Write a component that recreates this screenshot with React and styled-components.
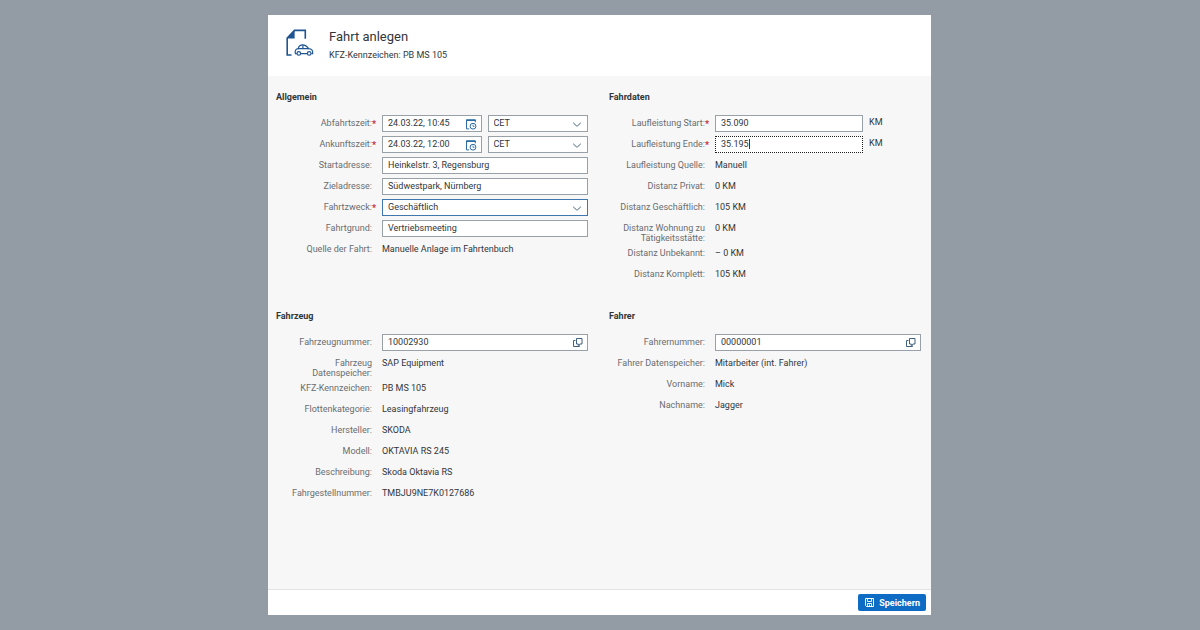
import React from "react";
import styled, { createGlobalStyle } from "styled-components";

const GlobalStyle = createGlobalStyle`
  * {
    box-sizing: border-box;
  }

  body {
    margin: 0;
    background-color: #939ca5;
    color: #32363a;
    font-family: Roboto, "Liberation Sans", sans-serif;
    font-size: 9px;
    line-height: 10px;
  }

  input, select, button {
    font: inherit;
    color: inherit;
  }
`;

const Page = styled.div`
  min-height: 100vh;
  padding: 15px 16px 15px 15px;
  display: flex;
  justify-content: center;
`;

const Dialog = styled.form`
  width: 100%;
  max-width: 663px;
  display: flex;
  flex-direction: column;
  background-color: #f7f7f7;
`;

const Header = styled.header`
  display: flex;
  gap: 14px;
  padding: 13px 17px 14px;
  background-color: #fff;
`;

const Title = styled.h1`
  margin: 0 0 3px;
  font-size: 13px;
  line-height: 17px;
  font-weight: 400;
`;

const Subtitle = styled.p`
  margin: 0;
  line-height: 14px;
`;

const Content = styled.main`
  flex: 1;
  display: grid;
  grid-template-columns: 1fr 1fr;
  align-content: start;
  gap: 25px 21px;
  padding: 15px 10px 15px 8px;
`;

const Section = styled.section`
  min-width: 0;
`;

const SectionTitle = styled.h2`
  margin: 0 0 10px;
  font-size: 9px;
  line-height: 12px;
  font-weight: 700;
`;

const Row = styled.div`
  display: grid;
  grid-template-columns: 96px 10px 1fr;
  align-items: start;
  min-height: 21px;
`;

const Label = styled.label`
  padding-top: 5px;
  color: #6a6d70;
  text-align: right;
`;

const Marker = styled.span`
  padding-top: 6px;
  color: #c4283a;
  font-weight: 700;
`;

const Value = styled.output`
  padding-top: 5px;
`;

const Fields = styled.div`
  display: flex;
  gap: 6px;
  padding-top: 2px;
`;

const Box = styled.div`
  flex: 1;
  min-width: 0;
  height: 17px;
  display: flex;
  align-items: flex-start;
  padding: 0 4px 0 5px;
  background-color: #fff;
  border: 1px ${(props) => (props.$focused ? "dotted" : "solid")}
    ${(props) => (props.$focused ? "#1c1f22" : props.$active ? "#3f78ae" : "#98a0a8")};
`;

const Input = styled.input`
  flex: ${(props) => (props.$fit ? "none" : "1")};
  field-sizing: ${(props) => (props.$fit ? "content" : "fixed")};
  width: ${(props) => (props.$fit ? "auto" : "100%")};
  min-width: 0;
  height: 14px;
  padding: 0;
  border: 0;
  outline: 0;
  background: transparent;
`;

const Caret = styled.span`
  width: 1px;
  height: 10px;
  margin-top: 2px;
  background-color: #32363a;
`;

const SelectBox = styled(Box)`
  display: grid;
  padding: 0 5px;

  > * {
    grid-area: 1 / 1;
  }

  > svg {
    justify-self: end;
    align-self: center;
    pointer-events: none;
  }
`;

const Select = styled.select`
  appearance: none;
  width: 100%;
  height: 14px;
  padding: 0;
  border: 0;
  outline: 0;
  background: transparent;
`;

const IconButton = styled.button`
  flex: none;
  align-self: center;
  display: flex;
  padding: 0;
  border: 0;
  background: transparent;
`;

const Unit = styled.span`
  flex: none;
  width: 52px;
  line-height: 14px;
`;

const Footer = styled.footer`
  display: flex;
  justify-content: flex-end;
  padding: 4px 5px;
  background-color: #fff;
  border-top: 1px solid #e2e3e5;
`;

const SaveButton = styled.button`
  display: flex;
  align-items: center;
  gap: 4px;
  height: 17px;
  padding: 0 6px;
  border: 0;
  border-radius: 2px;
  background-color: #0f6cc4;
  color: #fff;
  font-weight: 700;
`;

const TripIcon = () => (
  <svg width="30" height="30" viewBox="0 0 30 30" fill="none" stroke="#1f5591">
    <path d="M6.5 27H2.2V10L9.5 2.4h10.8v8.4" strokeWidth="1.6" />
    <path d="M1.8 10.5 9.6 2v8.5z" fill="#1f5591" stroke="none" />
    <g strokeWidth="1.2">
      <path d="M11.8 25.6h-1.4c-.8-3 .6-4.8 2.8-5 .7-2.6 2-3.7 4.4-3.7 2.8 0 4.3 1.2 6 3.8 3 .2 4.4 1.5 4.1 4.9h-1.3M15.8 25.6h6.4" />
      <path d="M13 20.7h10.8M17.9 17.1v3.4" />
      <circle cx="13.8" cy="25.4" r="1.8" />
      <circle cx="24.2" cy="25.4" r="1.8" />
    </g>
  </svg>
);

const DateTimeIcon = () => (
  <svg width="12" height="12" viewBox="0 0 12 12" fill="none" stroke="#2b6ca3">
    <path d="M4.2 10.9H1.5V2h8.8v2.3" />
    <path d="M1.2 2.2h9.4" strokeWidth="1.6" />
    <circle cx="8" cy="8.2" r="2.9" />
    <path d="M8 6.6v1.8h1.5" strokeWidth=".8" />
  </svg>
);

const ArrowIcon = () => (
  <svg width="10" height="10" viewBox="0 0 10 10" fill="none" stroke="#45617c">
    <path d="M1.2 3.8 4.4 6.8h1.2L8.8 3.8" />
  </svg>
);

const ValueHelpIcon = () => (
  <svg width="11" height="11" viewBox="0 0 11 11" fill="none" stroke="#41607e">
    <path d="M4.5 1.5h5.5v5.5H7.8L6.3 8.6V7H4.5z" />
    <path d="M3.5 3.5h-2v6h6V8.4" />
  </svg>
);

const SaveIcon = () => (
  <svg width="11" height="11" viewBox="0 0 11 11" fill="none" stroke="#fff">
    <path d="M1.5 1.5h8v8h-7l-1-1z" />
    <path d="M3.5 1.5v3h4v-3M3.5 9.5v-3h4v3M5.5 7.5v2" strokeWidth=".9" />
  </svg>
);

const Field = ({ id, label, required, children }) => (
  <Row>
    <Label htmlFor={id}>{label}:</Label>
    <Marker>{required && "*"}</Marker>
    {children}
  </Row>
);

const ReadOnly = ({ id, label, value }) => (
  <Field id={id} label={label}>
    <Value id={id}>{value}</Value>
  </Field>
);

const TextField = ({ id, label, value }) => (
  <Field id={id} label={label}>
    <Fields>
      <Box>
        <Input id={id} defaultValue={value} />
      </Box>
    </Fields>
  </Field>
);

const Dropdown = ({ id, value, active, name }) => (
  <SelectBox $active={active}>
    <Select id={id} defaultValue={value} aria-label={name}>
      <option>{value}</option>
    </Select>
    <ArrowIcon />
  </SelectBox>
);

const DateTimeField = ({ id, label, value }) => (
  <Field id={id} label={label} required>
    <Fields>
      <Box>
        <Input id={id} defaultValue={value} />
        <IconButton type="button" aria-label="Datum wählen">
          <DateTimeIcon />
        </IconButton>
      </Box>
      <Dropdown value="CET" name="Zeitzone" />
    </Fields>
  </Field>
);

const ValueHelpField = ({ id, label, value }) => (
  <Field id={id} label={label}>
    <Fields>
      <Box>
        <Input id={id} defaultValue={value} />
        <IconButton type="button" aria-label="Wertehilfe">
          <ValueHelpIcon />
        </IconButton>
      </Box>
    </Fields>
  </Field>
);

const MileageField = ({ id, label, value, focused }) => (
  <Field id={id} label={label} required>
    <Fields>
      <Box $focused={focused}>
        <Input id={id} defaultValue={value} $fit={focused} />
        {focused && <Caret />}
      </Box>
      <Unit>KM</Unit>
    </Fields>
  </Field>
);

const App = () => {
  return (
    <>
      <GlobalStyle />
      <Page>
        <Dialog>
          <Header>
            <TripIcon />
            <div>
              <Title>Fahrt anlegen</Title>
              <Subtitle>KFZ-Kennzeichen: PB MS 105</Subtitle>
            </div>
          </Header>
          <Content>
            <Section>
              <SectionTitle>Allgemein</SectionTitle>
              <DateTimeField id="abfahrt" label="Abfahrtszeit" value="24.03.22, 10:45" />
              <DateTimeField id="ankunft" label="Ankunftszeit" value="24.03.22, 12:00" />
              <TextField id="start" label="Startadresse" value="Heinkelstr. 3, Regensburg" />
              <TextField id="ziel" label="Zieladresse" value="Südwestpark, Nürnberg" />
              <Field id="zweck" label="Fahrtzweck" required>
                <Fields>
                  <Dropdown id="zweck" value="Geschäftlich" active />
                </Fields>
              </Field>
              <TextField id="grund" label="Fahrtgrund" value="Vertriebsmeeting" />
              <ReadOnly id="quelle" label="Quelle der Fahrt" value="Manuelle Anlage im Fahrtenbuch" />
            </Section>
            <Section>
              <SectionTitle>Fahrdaten</SectionTitle>
              <MileageField id="km-start" label="Laufleistung Start" value="35.090" />
              <MileageField id="km-ende" label="Laufleistung Ende" value="35.195" focused />
              <ReadOnly id="km-quelle" label="Laufleistung Quelle" value="Manuell" />
              <ReadOnly id="privat" label="Distanz Privat" value="0 KM" />
              <ReadOnly id="geschaeft" label="Distanz Geschäftlich" value="105 KM" />
              <ReadOnly id="wohnung" label="Distanz Wohnung zu Tätigkeitsstätte" value="0 KM" />
              <ReadOnly id="unbekannt" label="Distanz Unbekannt" value="– 0 KM" />
              <ReadOnly id="komplett" label="Distanz Komplett" value="105 KM" />
            </Section>
            <Section>
              <SectionTitle>Fahrzeug</SectionTitle>
              <ValueHelpField id="fahrzeug" label="Fahrzeugnummer" value="10002930" />
              <ReadOnly id="speicher" label="Fahrzeug Datenspeicher" value="SAP Equipment" />
              <ReadOnly id="kfz" label="KFZ-Kennzeichen" value="PB MS 105" />
              <ReadOnly id="flotte" label="Flottenkategorie" value="Leasingfahrzeug" />
              <ReadOnly id="hersteller" label="Hersteller" value="SKODA" />
              <ReadOnly id="modell" label="Modell" value="OKTAVIA RS 245" />
              <ReadOnly id="beschreibung" label="Beschreibung" value="Skoda Oktavia RS" />
              <ReadOnly id="gestell" label="Fahrgestellnummer" value="TMBJU9NE7K0127686" />
            </Section>
            <Section>
              <SectionTitle>Fahrer</SectionTitle>
              <ValueHelpField id="fahrer" label="Fahrernummer" value="00000001" />
              <ReadOnly id="fahrer-speicher" label="Fahrer Datenspeicher" value="Mitarbeiter (int. Fahrer)" />
              <ReadOnly id="vorname" label="Vorname" value="Mick" />
              <ReadOnly id="nachname" label="Nachname" value="Jagger" />
            </Section>
          </Content>
          <Footer>
            <SaveButton type="button">
              <SaveIcon />
              Speichern
            </SaveButton>
          </Footer>
        </Dialog>
      </Page>
    </>
  );
};

export default App;
